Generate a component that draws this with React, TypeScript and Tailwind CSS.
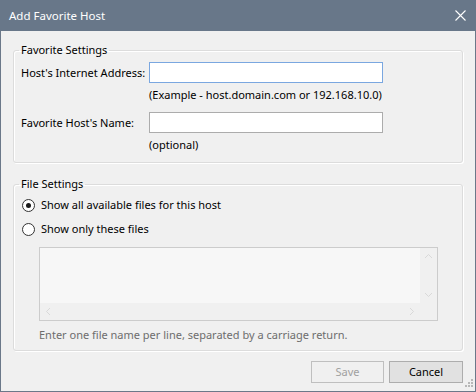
import React from "react"

const font = { fontFamily: '"Noto Sans", "Liberation Sans", sans-serif' }

function GroupBox({ title, className, children }: { title: string; className?: string; children: React.ReactNode }) {
  return (
    <fieldset
      className={
        "mx-[12px] rounded-[3px] border border-[#dcdcdc] shadow-[inset_1px_1px_0_#ffffff,1px_1px_0_#ffffff] " +
        (className ?? "")
      }
    >
      <legend className="ml-[5px] px-[2px] text-[11px] leading-[16px] text-black">{title}</legend>
      {children}
    </fieldset>
  )
}

function Radio({ checked, label }: { checked?: boolean; label: string }) {
  return (
    <div className="flex h-[24px] items-center pl-[8px]">
      <span className="flex h-[13px] w-[13px] items-center justify-center rounded-full border border-[#333333] bg-white">
        {checked && <span className="h-[5px] w-[5px] rounded-full bg-[#1a1a1a]" />}
      </span>
      <span className="ml-[6px] whitespace-nowrap text-[11px] text-black">{label}</span>
    </div>
  )
}

function Chevron({ d }: { d: string }) {
  return (
    <svg width="9" height="9" viewBox="0 0 9 9" fill="none" stroke="#d9d9d9" strokeWidth="1">
      <path d={d} />
    </svg>
  )
}

export default function App() {
  return (
    <div style={font} className="flex h-[392px] w-[476px] flex-col border-x border-b border-[#6b7889] bg-[#f0f0f0]">
      {/* title bar */}
      <div className="-mx-px flex h-[31px] shrink-0 items-center justify-between bg-[#687789] pl-[9px] pr-[10px] text-white">
        <span className="text-[11.5px]">Add Favorite Host</span>
        <svg width="11" height="11" viewBox="0 0 11 11" stroke="#ffffff" strokeWidth="1.1">
          <path d="M0.5 0.5 L10.5 10.5 M10.5 0.5 L0.5 10.5" />
        </svg>
      </div>

      <GroupBox title="Favorite Settings" className="mt-[11px]">
        <div className="flex flex-col whitespace-nowrap pb-[9px] pl-[7px] pt-[4px] text-[11px] leading-[16px] text-black">
          <div className="flex h-[21px] items-center">
            <span className="w-[128px]">Host's Internet Address:</span>
            <div className="h-[21px] w-[234px] border border-[#7aa7e0] bg-white" />
          </div>
          <div className="ml-[128px] mt-[4px]">(Example - host.domain.com or 192.168.10.0)</div>
          <div className="mt-[9px] flex h-[21px] items-center">
            <span className="w-[128px]">Favorite Host's Name:</span>
            <div className="h-[21px] w-[234px] border border-[#acacac] bg-white" />
          </div>
          <div className="ml-[128px] mt-[4px]">(optional)</div>
        </div>
      </GroupBox>

      <GroupBox title="File Settings" className="mt-[13px]">
        <div className="flex flex-col pb-[7px] pt-[1px]">
          <Radio checked label="Show all available files for this host" />
          <Radio label="Show only these files" />
          <div className="ml-[25px] mt-[6px] flex h-[74px] w-[399px] flex-col border border-[#cccccc] bg-[#f7f7f7]">
            <div className="flex flex-1">
              <div className="flex-1" />
              <div className="flex w-[17px] flex-col items-center justify-between bg-[#f0f0f0] py-[4px]">
                <Chevron d="M1 6 L4.5 2.5 L8 6" />
                <Chevron d="M1 3 L4.5 6.5 L8 3" />
              </div>
            </div>
            <div className="flex h-[17px] items-center bg-[#f0f0f0]">
              <div className="flex flex-1 items-center justify-between px-[4px]">
                <Chevron d="M6 1 L2.5 4.5 L6 8" />
                <Chevron d="M3 1 L6.5 4.5 L3 8" />
              </div>
              <div className="w-[17px]" />
            </div>
          </div>
          <div className="ml-[25px] mt-[6px] whitespace-nowrap text-[11px] leading-[16px] text-[#6d6d6d]">
            Enter one file name per line, separated by a carriage return.
          </div>
        </div>
      </GroupBox>

      <div className="relative flex flex-1 justify-end gap-[5px] pr-[12px] pt-[10px]">
        <button className="h-[22px] w-[73px] border border-[#bfbfbf] bg-[#f0f0f0] text-[11px] text-[#a0a0a0]">Save</button>
        <button className="h-[22px] w-[74px] border border-[#adadad] bg-[#e1e1e1] text-[11px] text-black">Cancel</button>
        <svg className="absolute bottom-[2px] right-[2px]" width="10" height="10" viewBox="0 0 10 10" fill="#b8b8b8">
          <rect x="8" y="0" width="2" height="2" />
          <rect x="5" y="3" width="2" height="2" />
          <rect x="8" y="3" width="2" height="2" />
          <rect x="2" y="6" width="2" height="2" />
          <rect x="5" y="6" width="2" height="2" />
          <rect x="8" y="6" width="2" height="2" />
        </svg>
      </div>
    </div>
  )
}
